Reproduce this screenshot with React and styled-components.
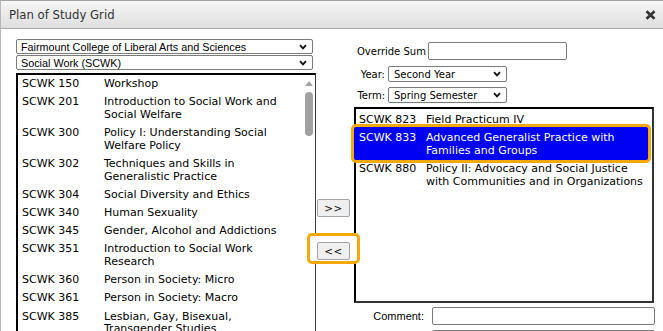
import React from 'react';
import styled, { createGlobalStyle } from 'styled-components';

const Global = createGlobalStyle`
  html, body { margin: 0; padding: 0; background: #fff; overflow: hidden; }
  #root { width: 663px; height: 331px; }
`;

const Dialog = styled.div`
  width: 663px;
  height: 331px;
  box-sizing: border-box;
  border-top: 1px solid #a2a2a2;
  border-left: 1px solid #b8b8b8;
  background: #fff;
  overflow: hidden;
  display: flex;
  flex-direction: column;
`;

const TitleBar = styled.div`
  flex: none;
  height: 28px;
  box-sizing: border-box;
  border-bottom: 1px solid #a9a9a9;
  background: linear-gradient(#f6f6f6, #dedede);
  display: flex;
  align-items: center;
  justify-content: space-between;
  padding: 0 7px 0 8px;
`;

const Title = styled.span`
  font-family: "Liberation Sans Narrow", "DejaVu Sans Condensed", "Liberation Sans", sans-serif;
  font-size: 13px;
  color: #333;
`;

const CloseIcon = () => (
  <svg width="11" height="10" viewBox="0 0 11 10">
    <path d="M1.5 1.2 L9.5 8.8 M9.5 1.2 L1.5 8.8" stroke="#333" strokeWidth="2.6" strokeLinecap="butt" />
  </svg>
);

const Body = styled.div`
  flex: 1;
  display: flex;
  align-items: flex-start;
  padding: 10px 0 0 15px;
`;

const LeftCol = styled.div`
  width: 300px;
  flex: none;
  display: flex;
  flex-direction: column;
`;

const SelectBox = styled.div`
  box-sizing: border-box;
  width: ${p => p.$w}px;
  height: ${p => p.$h}px;
  margin-top: ${p => p.$mt || 0}px;
  border: 1px solid #7a7a7a;
  border-radius: 2px;
  background: #fff;
  display: flex;
  align-items: center;
  justify-content: space-between;
  padding: 0 5px 0 ${p => p.$pl || 4}px;
  font-family: ${p => p.$verdana ? '"DejaVu Sans", Verdana, sans-serif' : '"Liberation Sans", Arial, sans-serif'};
  font-size: ${p => p.$verdana ? 10 : 10.8}px;
  color: #000;
  white-space: nowrap;
`;

const Chevron = () => (
  <svg width="8" height="6" viewBox="0 0 8 6">
    <path d="M1 1.2 L4 4.4 L7 1.2" fill="none" stroke="#111" strokeWidth="1.8" />
  </svg>
);

const Select = ({ children, ...rest }) => (
  <SelectBox {...rest}>
    <span>{children}</span>
    <Chevron />
  </SelectBox>
);

const ListBox = styled.div`
  box-sizing: border-box;
  position: relative;
  width: ${p => p.$w}px;
  height: ${p => p.$h}px;
  margin-top: ${p => p.$mt || 0}px;
  border-style: solid;
  border-color: #000 ${p => p.$rb} ${p => p.$rb} #000;
  border-width: 2px ${p => p.$rw}px 2px 2px;
  background: #fff;
  display: flex;
  overflow: ${p => p.$clip ? 'hidden' : 'visible'};
`;

const Items = styled.div`
  flex: 1;
  padding-top: ${p => p.$pt}px;
`;

const Row = styled.div`
  position: relative;
  display: grid;
  grid-template-columns: ${p => p.$code}px ${p => p.$desc}px;
  padding: ${p => p.$pv}px 0 ${p => p.$pv}px ${p => p.$pad}px;
  font-family: "DejaVu Sans", Verdana, sans-serif;
  font-size: 11px;
  line-height: ${p => p.$lh}px;
  color: ${p => (p.$selected ? '#fff' : '#000')};

  ${p => p.$selected && `
    &::before {
      content: "";
      position: absolute;
      top: -4px;
      bottom: -4px;
      left: -5px;
      right: 1px;
      border: 3px solid #f5a80c;
      border-radius: 5px;
      background: #0000f2;
    }
  `}
`;

const Cell = styled.span`
  position: relative;
  z-index: 1;
`;

const ScrollTrack = styled.div`
  width: 13px;
  flex: none;
  display: flex;
  flex-direction: column;
  align-items: center;
  padding-top: 6px;
  gap: 6px;
`;

const ArrowUp = styled.div`
  width: 0;
  height: 0;
  border-left: 4px solid transparent;
  border-right: 4px solid transparent;
  border-bottom: 5px solid #a3a3a3;
`;

const Thumb = styled.div`
  width: 8px;
  height: 44px;
  border-radius: 4px;
  background: #a1a1a1;
`;

const MidCol = styled.div`
  width: 38px;
  flex: none;
  display: flex;
  flex-direction: column;
  align-items: flex-start;
  padding: 160px 0 0 1px;
  box-sizing: border-box;
  gap: 24px;
`;

const MoveButton = styled.button`
  position: relative;
  z-index: 2;
  box-sizing: border-box;
  width: 33px;
  height: 18px;
  padding: 0;
  border: 1px solid #a3a3a3;
  border-radius: 2px;
  background: #efefef;
  font-family: "DejaVu Sans", Verdana, sans-serif;
  font-size: 10.5px;
  color: #111;
  letter-spacing: 0.5px;
`;

const Highlight = styled.div`
  position: relative;
  &::before {
    content: "";
    position: absolute;
    z-index: 1;
    top: -8px;
    bottom: -4px;
    left: -10px;
    right: -10px;
    border: 3px solid #f5a80c;
    border-radius: 5px;
    background: #fff;
  }
`;

const RightCol = styled.div`
  width: 301px;
  flex: none;
  display: flex;
  flex-direction: column;
`;

const FieldRow = styled.div`
  display: grid;
  grid-template-columns: ${p => p.$label}px auto;
  column-gap: ${p => p.$gap || 0}px;
  align-items: center;
  margin-top: ${p => p.$mt || 0}px;
  padding-left: ${p => p.$pl || 0}px;
`;

const Label = styled.span`
  font-family: ${p => p.$arial ? '"Liberation Sans", Arial, sans-serif' : '"DejaVu Sans", Verdana, sans-serif'};
  font-size: ${p => p.$arial ? 11 : 10}px;
  color: #000;
  text-align: ${p => p.$align || 'left'};
  white-space: nowrap;
`;

const TextInput = styled.div`
  box-sizing: border-box;
  width: ${p => p.$w}px;
  height: 18px;
  border: 1px solid #7a7a7a;
  border-radius: 2px;
  background: #fff;
`;

const leftCourses = [
  ['SCWK 150', 'Workshop'],
  ['SCWK 201', 'Introduction to Social Work and Social Welfare'],
  ['SCWK 300', 'Policy I: Understanding Social Welfare Policy'],
  ['SCWK 302', 'Techniques and Skills in Generalistic Practice'],
  ['SCWK 304', 'Social Diversity and Ethics'],
  ['SCWK 340', 'Human Sexuality'],
  ['SCWK 345', 'Gender, Alcohol and Addictions'],
  ['SCWK 351', 'Introduction to Social Work Research'],
  ['SCWK 360', 'Person in Society: Micro'],
  ['SCWK 361', 'Person in Society: Macro'],
  ['SCWK 385', 'Lesbian, Gay, Bisexual, Transgender Studies'],
];

const rightCourses = [
  ['SCWK 823', 'Field Practicum IV', false],
  ['SCWK 833', 'Advanced Generalist Practice with Families and Groups', true],
  ['SCWK 880', 'Policy II: Advocacy and Social Justice with Communities and in Organizations', false],
];

export default function App() {
  return (
    <>
      <Global />
      <Dialog>
        <TitleBar>
          <Title>Plan of Study Grid</Title>
          <CloseIcon />
        </TitleBar>
        <Body>
          <LeftCol>
            <Select $w={297} $h={15}>Fairmount College of Liberal Arts and Sciences</Select>
            <Select $w={297} $h={15} $mt={1}>Social Work (SCWK)</Select>
            <ListBox $w={300} $h={300} $mt={3} $rb="#3a3a3a" $rw={1} $clip>
              <Items $pt={0.5}>
                {leftCourses.map(([code, desc]) => (
                  <Row key={code} $code={82} $desc={198} $pad={4} $lh={12.6} $pv={2.8}>
                    <Cell>{code}</Cell>
                    <Cell>{desc}</Cell>
                  </Row>
                ))}
              </Items>
              <ScrollTrack>
                <ArrowUp />
                <Thumb />
              </ScrollTrack>
            </ListBox>
          </LeftCol>
          <MidCol>
            <MoveButton>&gt;&gt;</MoveButton>
            <Highlight>
              <MoveButton>&lt;&lt;</MoveButton>
            </Highlight>
          </MidCol>
          <RightCol>
            <FieldRow $label={71} $pl={3} $mt={3}>
              <Label>Override Sum</Label>
              <TextInput $w={139} />
            </FieldRow>
            <FieldRow $label={31} $gap={3} $mt={6}>
              <Label $align="right">Year:</Label>
              <Select $w={119} $h={16} $verdana $pl={5}>Second Year</Select>
            </FieldRow>
            <FieldRow $label={31} $gap={3} $mt={5}>
              <Label $align="right">Term:</Label>
              <Select $w={119} $h={16} $verdana $pl={5}>Spring Semester</Select>
            </FieldRow>
            <ListBox $w={300} $h={196} $mt={4} $rb="#333" $rw={2}>
              <Items $pt={1}>
                {rightCourses.map(([code, desc, sel]) => (
                  <Row key={code} $code={67} $desc={224} $pad={3} $lh={13} $pv={2.5} $selected={sel}>
                    <Cell>{code}</Cell>
                    <Cell>{desc}</Cell>
                  </Row>
                ))}
              </Items>
            </ListBox>
            <FieldRow $label={70} $gap={8} $mt={4}>
              <Label $align="right" $arial>Comment:</Label>
              <TextInput $w={223} />
            </FieldRow>
            <FieldRow $label={70} $gap={8} $mt={5}>
              <span />
              <TextInput $w={223} />
            </FieldRow>
          </RightCol>
        </Body>
      </Dialog>
    </>
  );
}
